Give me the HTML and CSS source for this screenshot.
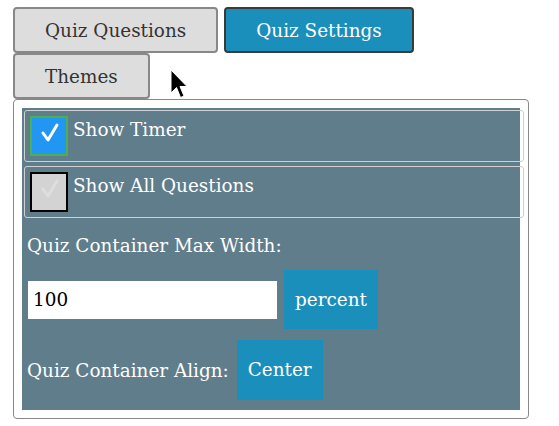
FILE: index.html
```html
<!DOCTYPE html>
<html>
<head>
<meta charset="utf-8">
<link rel="stylesheet" href="styles.css">
</head>
<body>
<div class="tabs">
  <button class="tab">Quiz Questions</button>
  <button class="tab tab-active">Quiz Settings</button>
  <button class="tab">Themes</button>
</div>
<div class="box">
  <div class="panel">
    <div class="row">
      <span class="check check-on"><svg width="34" height="36" viewBox="0 0 34 36"><path d="M11 15 L16 22 L25 7" fill="none" stroke="#fff" stroke-width="3" stroke-linecap="round" stroke-linejoin="round"/></svg></span>
      <span class="row-label">Show Timer</span>
    </div>
    <div class="row">
      <span class="check check-off"><svg width="34" height="36" viewBox="0 0 34 36"><path d="M11 15 L16 22 L25 7" fill="none" stroke="#dedede" stroke-width="3" stroke-linecap="round" stroke-linejoin="round"/></svg></span>
      <span class="row-label">Show All Questions</span>
    </div>
    <div class="field-label">Quiz Container Max Width:</div>
    <div class="input-row">
      <input class="num" type="text" value="100">
      <button class="btn">percent</button>
    </div>
    <div class="align-row">
      <span class="align-label">Quiz Container Align:</span>
      <button class="btn btn-tall">Center</button>
    </div>
  </div>
</div>
<svg class="cursor" width="20" height="32" viewBox="0 0 20 32"><path d="M1 1 L1 24 L6.5 18.5 L10.5 28.5 L14 27 L10 17.5 L17 17.5 Z" fill="#000" stroke="#fff" stroke-width="1"/></svg>
</body>
</html>
```

FILE: styles.css
```css
html, body {
  background: #fff;
}
body {
  margin: 0;
  padding: 7px 0 0 13px;
  font-family: "DejaVu Serif", serif;
  font-size: 18.4px;
}
.tabs {
  display: flex;
  flex-wrap: wrap;
  column-gap: 6px;
  row-gap: 0;
  width: 516px;
}
.tab {
  font-family: "DejaVu Serif", serif;
  font-size: 18.4px;
  line-height: 27px;
  padding: 8px 30px 7px;
  border: 2px solid #888;
  border-radius: 4px;
  background: #dddddd;
  color: #333;
  margin: 0;
}
.tab-active {
  background: #1b8fbc;
  border-color: #3a3a3a;
  color: #fff;
}
.box {
  width: 498px;
  border: 1px solid #888;
  border-radius: 4px;
  padding: 8px;
}
.panel {
  display: flex;
  flex-direction: column;
  align-items: flex-start;
  background: #607d8b;
  padding-bottom: 10px;
  color: #fff;
}
.row {
  box-sizing: border-box;
  width: calc(100% + 2px);
  margin: 2px;
  border: 1px solid #d0d0d0;
  border-radius: 3px;
  padding: 5px;
  display: flex;
  align-items: flex-start;
  gap: 5px;
}
.check {
  box-sizing: border-box;
  width: 38px;
  height: 40px;
  border: 2px solid #4caf50;
  background: #2196f3;
  display: block;
  flex: none;
}
.check svg {
  display: block;
}
.check-off {
  border-color: #000;
  background: #d3d3d3;
}
.row-label {
  line-height: 27px;
}
.field-label {
  margin-top: 12px;
  padding-left: 5px;
  line-height: 27px;
}
.input-row {
  margin-top: 11px;
  padding-left: 6px;
  display: flex;
  align-items: center;
  gap: 7px;
}
.num {
  box-sizing: border-box;
  width: 249px;
  height: 38px;
  border: none;
  outline: none;
  background: #fff;
  padding: 0 5px;
  margin: 0;
  font-family: "DejaVu Serif", serif;
  font-size: 18.4px;
  color: #000;
}
.btn {
  font-family: "DejaVu Serif", serif;
  font-size: 18.4px;
  line-height: 27px;
  padding: 16px 11px;
  margin: 0;
  border: none;
  background: #1b8fbc;
  color: #fff;
}
.btn-tall {
  padding-bottom: 17px;
}
.align-row {
  margin-top: 11px;
  padding-left: 5px;
  display: flex;
  align-items: center;
  gap: 8px;
}
.align-label {
  line-height: 27px;
}
.cursor {
  position: absolute;
  left: 170px;
  top: 69px;
}
```
